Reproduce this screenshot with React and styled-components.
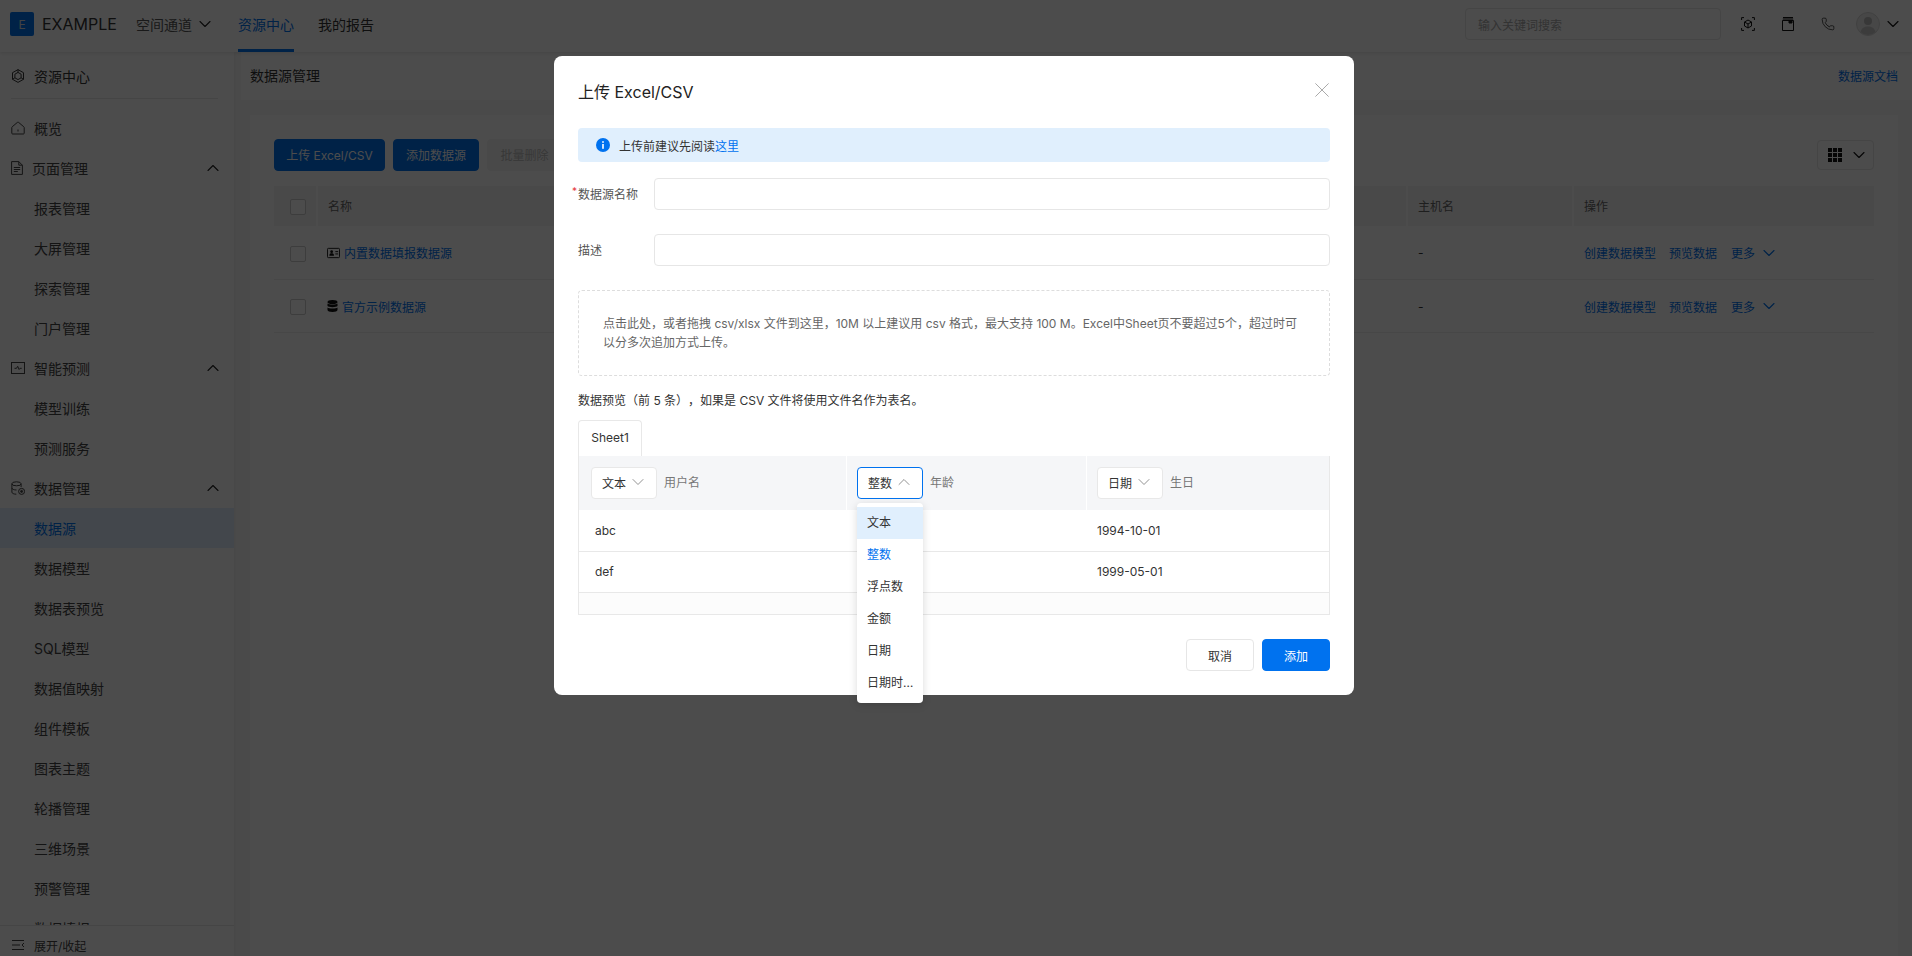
import React from "react";
import styled, { createGlobalStyle } from "styled-components";
import { ChevronDown, ChevronUp, Phone } from "lucide-react";

const Global = createGlobalStyle`
  html, body { margin: 0; padding: 0; height: 100%; overflow: hidden; }
  body { font-family: Inter, "Noto Sans CJK SC", sans-serif; color: #333; background: #fff; text-spacing-trim: space-all; }
  * { box-sizing: border-box; }
`;

const Page = styled.div`
  position: relative;
  width: 1912px;
  height: 956px;
  display: flex;
  flex-direction: column;
  overflow: hidden;
`;

const Header = styled.header`
  height: 52px;
  flex: none;
  display: flex;
  align-items: flex-start;
  padding: 0 14px 0 10px;
  background: #fff;
  box-shadow: 0 1px 4px rgba(0, 0, 0, 0.12);
  position: relative;
  z-index: 1;
`;
const Logo = styled.div`
  width: 24px;
  height: 24px;
  margin-top: 12px;
  border-radius: 2px;
  background: #0072ef;
  color: #ddd;
  font-size: 12px;
  display: flex;
  align-items: center;
  justify-content: center;
`;
const Brand = styled.div`
  height: 48px;
  margin-left: 8px;
  width: 94px;
  font-size: 16px;
  display: flex;
  align-items: center;
  color: #333;
`;
const Space = styled.div`
  height: 48px;
  width: 102px;
  font-size: 14px;
  color: #555;
  display: flex;
  align-items: center;
  gap: 8px;
`;
const NavTab = styled.div`
  height: 52px;
  width: ${(p) => p.$w}px;
  padding-bottom: 4px;
  display: flex;
  align-items: center;
  font-size: 14px;
  color: ${(p) => (p.$active ? "#0072ef" : "#333")};
  position: relative;
  &::after {
    content: "";
    display: ${(p) => (p.$active ? "block" : "none")};
    position: absolute;
    left: 0;
    width: 56px;
    bottom: 0;
    height: 3px;
    background: #0072ef;
  }
`;
const HeaderRight = styled.div`
  margin-left: auto;
  height: 48px;
  display: flex;
  align-items: center;
`;
const Search = styled.div`
  width: 256px;
  height: 32px;
  margin-right: 7px;
  padding-left: 12px;
  border: 1px solid #e6e6e6;
  border-radius: 4px;
  display: flex;
  align-items: center;
  font-size: 12px;
  color: #aaa;
`;
const IconSlot = styled.div`
  width: 40px;
  height: 48px;
  display: flex;
  align-items: center;
  justify-content: center;
  color: #111;
`;
const Chevron = styled.span`
  width: 10px;
  height: 10px;
  flex: none;
  display: flex;
  align-items: center;
  justify-content: center;
  color: ${(p) => p.$color ?? "currentColor"};
`;

const Body = styled.div`
  flex: 1;
  min-height: 0;
  display: flex;
`;
const Sidebar = styled.aside`
  width: 234px;
  flex: none;
  display: flex;
  flex-direction: column;
  background: #fff;
  box-shadow: 1px 0 3px rgba(0, 0, 0, 0.04);
  position: relative;
`;
const SideTitle = styled.div`
  height: 47px;
  margin: 0 16px 9px 11px;
  padding-top: 2px;
  border-bottom: 1px solid #e8e8e8;
  display: flex;
  align-items: center;
  gap: 9px;
  font-size: 14px;
  color: #333;
  flex: none;
`;
const SideList = styled.div`
  flex: 1;
  min-height: 0;
  overflow: hidden;
`;
const SideItem = styled.div`
  height: 40px;
  display: flex;
  align-items: center;
  padding: 0 16px 0 ${(p) => (p.$icon ? 11 : 34)}px;
  gap: 9px;
  font-size: 14px;
  color: ${(p) => (p.$active ? "#0072ef" : "#444")};
  background: ${(p) => (p.$active ? "#e0effd" : "transparent")};
`;
const SideCaret = styled.span`
  margin-left: auto;
  display: flex;
  color: #222;
`;
const SideFooter = styled.div`
  height: 31px;
  flex: none;
  border-top: 1px solid #e8e8e8;
  display: flex;
  align-items: center;
  gap: 10px;
  padding: 8px 0 0 12px;
  font-size: 12px;
  color: #444;
`;

const Main = styled.main`
  flex: 1;
  min-width: 0;
  background: #f8f8f8;
  padding-left: 7px;
  display: flex;
  flex-direction: column;
`;
const PageHead = styled.div`
  height: 48px;
  flex: none;
  background: #fff;
  padding: 0 14px 2px 9px;
  display: flex;
  align-items: center;
  justify-content: space-between;
  font-size: 14px;
  color: #333;
`;
const DocLink = styled.span`
  font-size: 12px;
  color: #0072ef;
`;
const Card = styled.div`
  flex: 1;
  margin: 15px 14px 0 9px;
  padding: 24px;
  background: #fff;
`;
const Toolbar = styled.div`
  display: flex;
  align-items: center;
  gap: 8px;
  height: 32px;
`;
const Button = styled.button`
  height: 32px;
  width: ${(p) => p.$w}px;
  padding: 0 0 ${(p) => p.$lift ?? 0}px;
  border-radius: 4px;
  border: 1px solid ${(p) => (p.$primary ? "#0072ef" : p.$disabled ? "#f3f3f3" : "#e6e6e6")};
  background: ${(p) => (p.$primary ? "#0072ef" : p.$disabled ? "#f5f5f5" : "#fff")};
  color: ${(p) => (p.$primary ? "#fff" : p.$disabled ? "#bbb" : "#333")};
  font: 12px Inter, "Noto Sans CJK SC", sans-serif;
`;
const ColumnPicker = styled.div`
  margin-left: auto;
  width: 57px;
  height: 30px;
  padding-left: 10px;
  border: 1px solid #e6e6e6;
  border-radius: 4px;
  display: flex;
  align-items: center;
  gap: 12px;
  color: #111;
`;
const DataGrid = styled.div`
  margin-top: 15px;
  font-size: 12px;
`;
const GridRow = styled.div`
  display: grid;
  grid-template-columns: 42px 1090px 166px 1fr;
  height: ${(p) => p.$h}px;
  background: ${(p) => (p.$head ? "#f5f5f5" : "transparent")};
  border-bottom: ${(p) => (p.$head ? "none" : "1px solid #eee")};
  color: ${(p) => (p.$head ? "#666" : "#333")};
`;
const GridCell = styled.div`
  display: flex;
  align-items: center;
  padding-left: ${(p) => p.$pad ?? 10}px;
  padding-bottom: ${(p) => (p.$lift ? 2 : 0)}px;
  gap: 4px;
  border-left: ${(p) => (p.$sep ? "2px solid #fff" : "none")};
`;
const Check = styled.span`
  width: 16px;
  height: 16px;
  margin-top: 2px;
  border: 1px solid #ccc;
  border-radius: 2px;
  background: #fff;
  display: block;
`;
const Link = styled.span`
  color: #0072ef;
  display: inline-flex;
  align-items: center;
  gap: ${(p) => p.$gap ?? 0}px;
  margin-right: ${(p) => p.$mr ?? 0}px;
`;

const Mask = styled.div`
  position: absolute;
  inset: 0;
  z-index: 10;
  background: rgba(0, 0, 0, 0.7);
  display: flex;
  justify-content: center;
  align-items: flex-start;
  padding-top: 56px;
  padding-right: 4px;
`;
const Modal = styled.div`
  width: 800px;
  height: 639px;
  padding: 23px 24px 24px;
  background: #fff;
  border-radius: 8px;
  font-size: 12px;
  color: #333;
`;
const ModalHead = styled.div`
  height: 24px;
  display: flex;
  align-items: center;
  justify-content: space-between;
  font-size: 16px;
  color: #222;
`;
const Close = styled.span`
  display: flex;
  color: #aaa;
  margin: -3px 1px 0 0;
`;
const Alert = styled.div`
  height: 34px;
  margin-top: 25px;
  padding-left: 18px;
  border-radius: 4px;
  background: #e0effd;
  display: flex;
  align-items: center;
  gap: 9px;
`;
const Accent = styled.span`
  color: #0072ef;
`;
const FormRow = styled.div`
  height: 32px;
  margin-top: ${(p) => p.$mt}px;
  display: grid;
  grid-template-columns: 76px 1fr;
  align-items: center;
`;
const FieldLabel = styled.label`
  position: relative;
  color: #555;
  margin-top: -2px;
  ${(p) =>
    p.$required &&
    `&::before { content: "*"; position: absolute; left: -6px; top: 0; font-size: 10px; color: #e5383b; }`}
`;
const Field = styled.div`
  height: 32px;
  border: 1px solid #e6e6e6;
  border-radius: 4px;
`;
const Drop = styled.div`
  height: 86px;
  margin-top: 24px;
  padding: 23px 26px 0 24px;
  border: 1px dashed #ddd;
  border-radius: 4px;
  color: #666;
  line-height: 19px;
`;
const Caption = styled.div`
  height: 20px;
  margin-top: 15px;
  line-height: 20px;
`;
const SheetTab = styled.div`
  width: 64px;
  height: 36px;
  margin-top: 9px;
  padding-bottom: 2px;
  border: 1px solid #e8e8e8;
  border-bottom: none;
  border-radius: 4px 4px 0 0;
  display: flex;
  align-items: center;
  justify-content: center;
`;
const Preview = styled.div`
  border: 1px solid #e8e8e8;
  border-top: none;
  background: #fff;
`;
const PreviewRow = styled.div`
  display: grid;
  grid-template-columns: 267px 240px 1fr;
  height: ${(p) => (p.$head ? 54 : 41)}px;
  margin-bottom: ${(p) => (p.$head ? 1 : 0)}px;
  background: ${(p) => (p.$head ? "#f5f6f8" : "#fff")};
  border-bottom: ${(p) => (p.$head ? "none" : "1px solid #e8e8e8")};
`;
const HeadCell = styled.div`
  display: flex;
  align-items: center;
  gap: 7px;
  padding-left: ${(p) => (p.$first ? 12 : 10)}px;
  border-left: ${(p) => (p.$first ? "none" : "1px solid #fff")};
  color: #777;
`;
const HeadName = styled.span`
  margin-top: -3px;
`;
const BodyCell = styled.div`
  display: flex;
  align-items: center;
  padding-left: ${(p) => (p.$first ? 16 : 11)}px;
  padding-bottom: 2px;
  color: #333;
`;
const ScrollFill = styled.div`
  height: 21px;
  background: #fcfcfc;
`;
const TypeSelect = styled.div`
  position: relative;
  width: 66px;
  height: 32px;
  padding: 0 0 2px 10px;
  border: 1px solid ${(p) => (p.$open ? "#0072ef" : "#e8e8e8")};
  border-radius: 4px;
  background: #fff;
  display: flex;
  align-items: center;
  gap: 7px;
  color: #333;
`;
const Menu = styled.div`
  position: absolute;
  top: calc(100% + 5px);
  left: -1px;
  width: 66px;
  padding: 4px 0;
  background: #fff;
  border-radius: 4px;
  box-shadow: 0 2px 8px rgba(0, 0, 0, 0.15);
  z-index: 2;
`;
const MenuItem = styled.div`
  height: 32px;
  line-height: 32px;
  padding: 0 9px 0 10px;
  white-space: nowrap;
  overflow: hidden;
  text-overflow: ellipsis;
  color: ${(p) => (p.$selected ? "#0072ef" : "#333")};
  background: ${(p) => (p.$hover ? "#e0effd" : "transparent")};
`;
const ModalFoot = styled.div`
  margin-top: 24px;
  display: flex;
  justify-content: flex-end;
  gap: 8px;
`;

const Down = ({ color, sw = 1.1 }) => (
  <Chevron $color={color}>
    <ChevronDown size={20} strokeWidth={sw} style={{ flex: "none" }} />
  </Chevron>
);
const Up = ({ color, sw = 1.1 }) => (
  <Chevron $color={color}>
    <ChevronUp size={20} strokeWidth={sw} style={{ flex: "none" }} />
  </Chevron>
);

const Svg = ({ size = 14, w, h, children, vb = "0 0 14 14", ...rest }) => (
  <svg width={w ?? size} height={h ?? size} viewBox={vb} fill="none" stroke="currentColor" strokeWidth="1" {...rest}>
    {children}
  </svg>
);
const HubIcon = () => (
  <Svg>
    <path d="M7 .6l5.5 3.100v6.600L7 13.400l-5.500-3.100V3.700z" strokeLinejoin="round" />
    <path d="M7 3.400l3.100 1.800v3.600L7 10.600 3.900 8.800V5.200z" />
    <path d="M7 .6v2.800M1.500 10.300l2.400-1.500M12.500 10.300l-2.400-1.500" />
  </Svg>
);
const HomeIcon = () => (
  <Svg>
    <path d="M.8 6.600a1 1 0 0 1 .4-.8L6.400 1.400a1 1 0 0 1 1.200 0l5.200 4.400a1 1 0 0 1 .4.8v5.600a.8.8 0 0 1-.8.8H1.600a.8.8 0 0 1-.8-.8z" />
    <path d="M7 8.500v2" />
  </Svg>
);
const DocIcon = () => (
  <Svg w={12} h={14} vb="0 0 12 14">
    <path d="M.6.6h7.200l3.600 3.600v9.200H.6z" />
    <path d="M7.800.6v3.600h3.600M2.800 6.500h6.400M2.800 8.500h6.400M2.800 10.500h4" />
  </Svg>
);
const ChartIcon = () => (
  <Svg>
    <rect x=".5" y="1.500" width="13" height="11" />
    <path d="M3.500 7.300h2l1.200-2 1.400 3.200 1-1.200h1.600" />
  </Svg>
);
const DbIcon = () => (
  <Svg>
    <ellipse cx="5.500" cy="2.800" rx="4.600" ry="2" />
    <path d="M.9 2.800v8.400c0 1.100 2 2 4.400 2M.9 7c0 1.100 2 2 4.600 2M10.100 2.800V6" />
    <circle cx="10.600" cy="10.400" r="3" />
    <circle cx="10.600" cy="10.400" r="1" fill="currentColor" />
  </Svg>
);
const CollapseIcon = () => (
  <Svg w={12} h={10} vb="0 0 12 10">
    <path d="M0 .5h12M0 5h8M0 9.500h12M12 3L10 5l2 2" />
  </Svg>
);
const ScanCube = () => (
  <Svg>
    <path d="M.6 3V.6H3M11 .6h2.400V3M13.400 11v2.400H11M3 13.400H.6V11" />
    <path d="M7 3l3.500 2v4L7 11 3.500 9V5zM3.500 5L7 7l3.500-2M7 7v4" />
  </Svg>
);
const BookIcon = () => (
  <Svg w={12} h={14} vb="0 0 12 14">
    <path d="M.5 3.500h11v10H.5zM1 .5h10M.8 2h10.400" />
    <path d="M7 3.500h3v2.500H7z" fill="currentColor" />
  </Svg>
);
const Avatar = () => (
  <svg width="24" height="24" viewBox="0 0 24 24">
    <circle cx="12" cy="12" r="11.500" fill="#ededed" stroke="#d8d8d8" />
    <circle cx="12" cy="9" r="4" fill="#bbb" />
    <path d="M4.500 20c1-4 4-5.500 7.500-5.500s6.500 1.500 7.500 5.500a11 11 0 0 1-15 0z" fill="#c8c8c8" />
  </svg>
);
const GridIcon = () => (
  <svg width="14" height="14" viewBox="0 0 14 14" fill="currentColor">
    {[0, 5, 10].map((y) =>
      [0, 5, 10].map((x) => <rect key={`${x}-${y}`} x={x} y={y} width="4" height="4" />)
    )}
  </svg>
);
const CardIcon = () => (
  <svg width="13" height="12" viewBox="0 0 14 12">
    <rect x=".5" y="1" width="13" height="10" rx="1" fill="none" stroke="#111" />
    <circle cx="5" cy="4.600" r="1.500" fill="#111" />
    <path d="M2.500 9c0-2 1-2.600 2.500-2.600S7.500 7 7.500 9z" fill="#111" />
    <path d="M9 4.500h3M9 7h3" stroke="#111" />
  </svg>
);
const StackIcon = () => (
  <svg width="11" height="12" viewBox="0 0 11 12" fill="#111">
    <ellipse cx="5.500" cy="2" rx="5" ry="2" />
    <path d="M.5 3.500c1 1.300 9 1.300 10 0V6c-1 1.500-9 1.500-10 0zM.5 7.500c1 1.300 9 1.300 10 0V10c0 1.100-2.200 2-5 2s-5-.9-5-2z" />
  </svg>
);
const InfoIcon = () => (
  <svg width="14" height="14" viewBox="0 0 14 14">
    <circle cx="7" cy="7" r="7" fill="#0072ef" />
    <rect x="6.200" y="6" width="1.600" height="4.800" fill="#fff" />
    <rect x="6.200" y="3.200" width="1.600" height="1.600" fill="#fff" />
  </svg>
);
const CloseIcon = () => (
  <Svg>
    <path d="M.4.4l13.200 13.200M13.600.4L.4 13.600" />
  </Svg>
);

const sideItems = [
  { t: "概览", i: <HomeIcon /> },
  { t: "页面管理", i: <DocIcon />, up: true },
  { t: "报表管理" },
  { t: "大屏管理" },
  { t: "探索管理" },
  { t: "门户管理" },
  { t: "智能预测", i: <ChartIcon />, up: true },
  { t: "模型训练" },
  { t: "预测服务" },
  { t: "数据管理", i: <DbIcon />, up: true },
  { t: "数据源", active: true },
  { t: "数据模型" },
  { t: "数据表预览" },
  { t: "SQL模型" },
  { t: "数据值映射" },
  { t: "组件模板" },
  { t: "图表主题" },
  { t: "轮播管理" },
  { t: "三维场景" },
  { t: "预警管理" },
  { t: "数据填报" },
];

const Actions = () => (
  <>
    <Link $mr={9}>创建数据模型</Link>
    <Link $mr={10}>预览数据</Link>
    <Link $gap={9}>
      更多 <Down sw={1.3} />
    </Link>
  </>
);

const options = ["文本", "整数", "浮点数", "金额", "日期", "日期时间"];

export default function App() {
  return (
    <Page>
      <Global />
      <Header>
        <Logo>E</Logo>
        <Brand>EXAMPLE</Brand>
        <Space>
          空间通道 <Down color="#222" sw={1.3} />
        </Space>
        <NavTab $w={80} $active>资源中心</NavTab>
        <NavTab $w={80}>我的报告</NavTab>
        <HeaderRight>
          <Search>输入关键词搜索</Search>
          <IconSlot><ScanCube /></IconSlot>
          <IconSlot><BookIcon /></IconSlot>
          <IconSlot><Phone size={14} strokeWidth={1.2} /></IconSlot>
          <IconSlot><Avatar /></IconSlot>
          <Down color="#111" sw={1.3} />
        </HeaderRight>
      </Header>
      <Body>
        <Sidebar>
          <SideTitle><HubIcon />资源中心</SideTitle>
          <SideList>
            {sideItems.map((s) => (
              <SideItem key={s.t} $icon={!!s.i} $active={s.active}>
                {s.i}
                {s.t}
                {s.up && <SideCaret><Up sw={1.3} /></SideCaret>}
              </SideItem>
            ))}
          </SideList>
          <SideFooter><CollapseIcon />展开/收起</SideFooter>
        </Sidebar>
        <Main>
          <PageHead>
            数据源管理
            <DocLink>数据源文档</DocLink>
          </PageHead>
          <Card>
            <Toolbar>
              <Button $primary $w={111} $lift={2}>上传 Excel/CSV</Button>
              <Button $primary $w={86} $lift={2}>添加数据源</Button>
              <Button $disabled $w={75} $lift={2}>批量删除</Button>
              <ColumnPicker>
                <GridIcon />
                <Down sw={1.3} />
              </ColumnPicker>
            </Toolbar>
            <DataGrid>
              <GridRow $head $h={40}>
                <GridCell $pad={16}><Check /></GridCell>
                <GridCell $sep $lift>名称</GridCell>
                <GridCell $sep $lift>主机名</GridCell>
                <GridCell $sep $lift>操作</GridCell>
              </GridRow>
              <GridRow $h={54}>
                <GridCell $pad={16}><Check /></GridCell>
                <GridCell $sep $pad={9}><CardIcon /><Link>内置数据填报数据源</Link></GridCell>
                <GridCell $sep>-</GridCell>
                <GridCell $sep><Actions /></GridCell>
              </GridRow>
              <GridRow $h={53}>
                <GridCell $pad={16}><Check /></GridCell>
                <GridCell $sep $pad={9}><StackIcon /><Link>官方示例数据源</Link></GridCell>
                <GridCell $sep>-</GridCell>
                <GridCell $sep><Actions /></GridCell>
              </GridRow>
            </DataGrid>
          </Card>
        </Main>
      </Body>
      <Mask>
        <Modal>
          <ModalHead>
            上传 Excel/CSV
            <Close><CloseIcon /></Close>
          </ModalHead>
          <Alert>
            <InfoIcon />
            <span>上传前建议先阅读<Accent>这里</Accent></span>
          </Alert>
          <FormRow $mt={16}>
            <FieldLabel $required>数据源名称</FieldLabel>
            <Field />
          </FormRow>
          <FormRow $mt={24}>
            <FieldLabel>描述</FieldLabel>
            <Field />
          </FormRow>
          <Drop>
            点击此处，或者拖拽 csv/xlsx 文件到这里，10M 以上建议用 csv 格式，最大支持 100 M。Excel中Sheet页不要超过5个，超过时可以分多次追加方式上传。
          </Drop>
          <Caption>数据预览（前 5 条），如果是 CSV 文件将使用文件名作为表名。</Caption>
          <SheetTab>Sheet1</SheetTab>
          <Preview>
            <PreviewRow $head>
              <HeadCell $first>
                <TypeSelect>文本<Down color="#888" /></TypeSelect>
                <HeadName>用户名</HeadName>
              </HeadCell>
              <HeadCell>
                <TypeSelect $open>
                  整数<Up color="#888" />
                  <Menu>
                    {options.map((o, i) => (
                      <MenuItem key={o} $hover={i === 0} $selected={i === 1}>{o}</MenuItem>
                    ))}
                  </Menu>
                </TypeSelect>
                <HeadName>年龄</HeadName>
              </HeadCell>
              <HeadCell>
                <TypeSelect>日期<Down color="#888" /></TypeSelect>
                <HeadName>生日</HeadName>
              </HeadCell>
            </PreviewRow>
            <PreviewRow>
              <BodyCell $first>abc</BodyCell>
              <BodyCell>18</BodyCell>
              <BodyCell>1994-10-01</BodyCell>
            </PreviewRow>
            <PreviewRow>
              <BodyCell $first>def</BodyCell>
              <BodyCell>20</BodyCell>
              <BodyCell>1999-05-01</BodyCell>
            </PreviewRow>
            <ScrollFill />
          </Preview>
          <ModalFoot>
            <Button $w={68}>取消</Button>
            <Button $primary $w={68}>添加</Button>
          </ModalFoot>
        </Modal>
      </Mask>
    </Page>
  );
}
